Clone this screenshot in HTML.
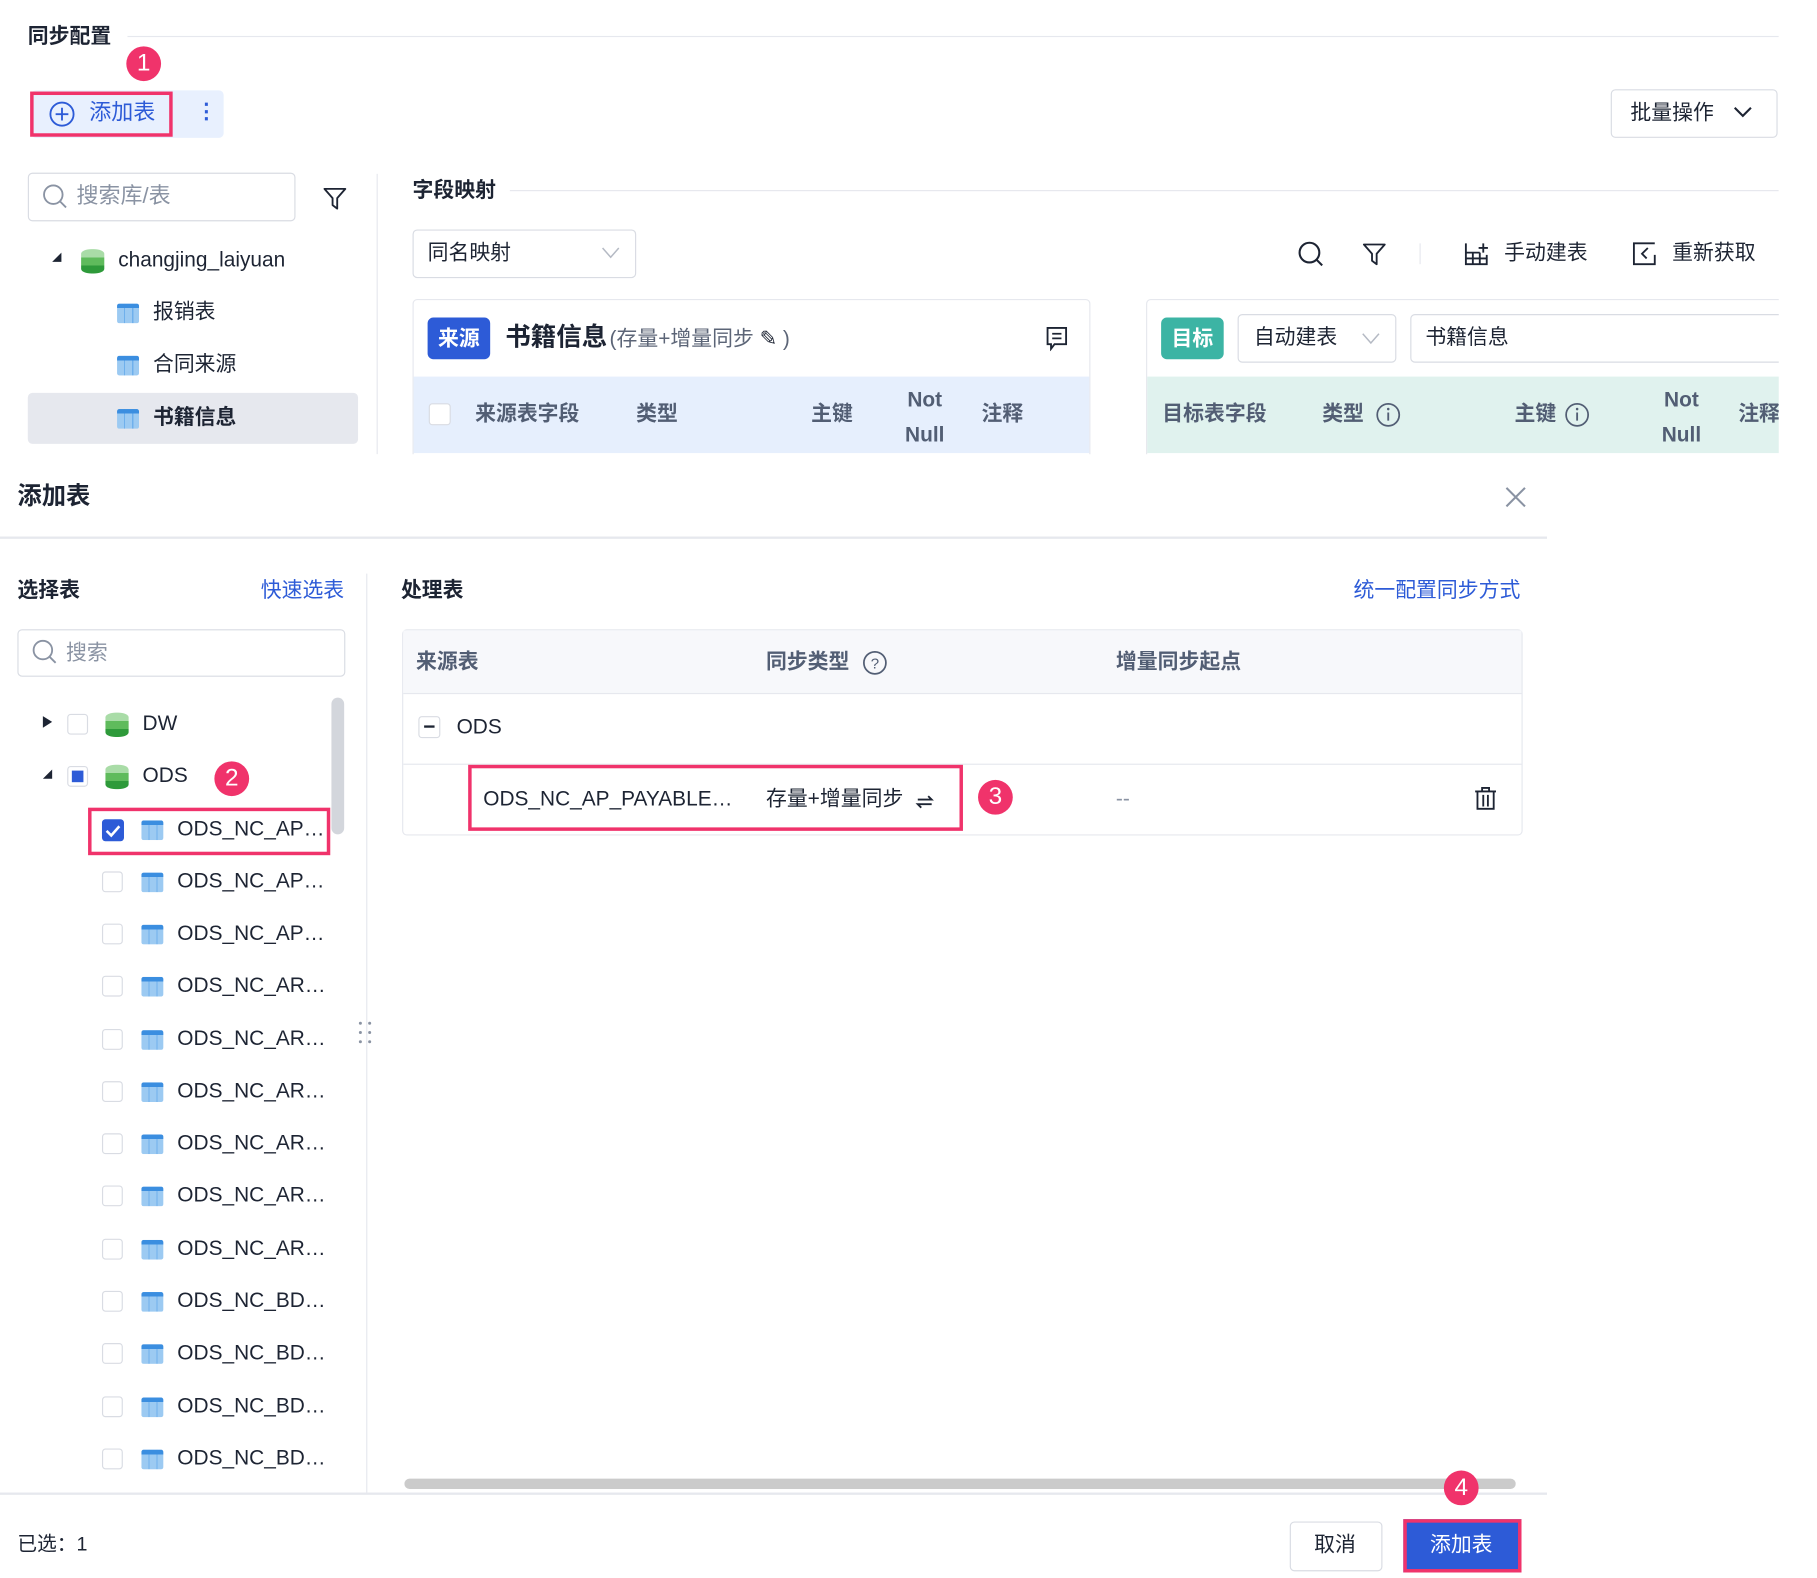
<!DOCTYPE html>
<html><head><meta charset="utf-8"><style>
html,body{margin:0;padding:0;background:#fff;overflow:hidden;width:1817px;height:1572px}
#w{position:absolute;left:0;top:0;width:1568px;height:1357px;transform:scale(1.1588);transform-origin:0 0;font-family:"Liberation Sans","Noto Sans CJK SC",sans-serif;color:#1d2433;font-size:18px}
.a{position:absolute;white-space:nowrap;line-height:1.2}
.b{font-weight:bold}
.line{position:absolute;background:#e6e8ee}
.box{position:absolute;border:1px solid #d9dce3;border-radius:4px;box-sizing:border-box}
.pink{position:absolute;border:3px solid #f0336b;box-sizing:border-box}
.badge{position:absolute;width:30px;height:30px;border-radius:50%;background:#f0336b;color:#fff;font-size:21px;text-align:center;line-height:30px!important}
.hd{color:#525e74;font-weight:bold}
.cb{position:absolute;width:18px;height:18px;border:1px solid #d9dce3;border-radius:3px;box-sizing:border-box;background:#fff}
.tb{position:absolute;width:19px;height:17px;border-radius:2px;background:linear-gradient(#3b8ee0 0 4px,transparent 4px),repeating-linear-gradient(90deg,#9ccaf2 0 6px,#6fb0ec 6px 7px);}
.db{position:absolute;width:20px;height:21px;border-radius:9px/4px;background:linear-gradient(#a9dca7 0 7px,#5fbb5c 7px 14px,#2e9a3a 14px)}
.gray{color:#8a93a3}
.blue{color:#2d5bd7}
</style></head><body><div id="w">
<div class="a b" style="left:24px;top:21px;font-size:18px">同步配置</div>
<div class="line" style="left:110px;top:31px;width:1425px;height:1px"></div>
<div class="a" style="left:27px;top:78px;width:166px;height:41px;background:#e8f0fe;border-radius:4px"></div>
<div class="pink" style="left:26px;top:79px;width:123px;height:39px"></div>
<svg class="a" style="left:42px;top:87px" width="23" height="23" viewBox="0 0 23 23"><circle cx="11.5" cy="11.5" r="10" fill="none" stroke="#2d5bd7" stroke-width="1.6"/><path d="M11.5 6v11M6 11.5h11" stroke="#2d5bd7" stroke-width="1.6"/></svg>
<div class="a blue" style="left:77px;top:87px;font-size:19px">添加表</div>
<div class="a blue" style="left:169px;top:86px;font-size:18px;font-weight:bold">⋮</div>
<div class="badge" style="left:109px;top:40px">1</div>
<div class="box" style="left:1390px;top:77px;width:144px;height:42px"></div>
<div class="a" style="left:1407px;top:87px">批量操作</div>
<svg class="a" style="left:1495px;top:91px" width="18" height="12"><path d="M2 2l7 7 7-7" fill="none" stroke="#1d2433" stroke-width="1.8"/></svg>

<div class="box" style="left:24px;top:149px;width:231px;height:42px"></div>
<svg class="a" style="left:36px;top:158px" width="24" height="24"><circle cx="10" cy="10" r="8" fill="none" stroke="#8a93a3" stroke-width="1.6"/><path d="M16 16l5 5" stroke="#8a93a3" stroke-width="1.6"/></svg>
<div class="a gray" style="left:66px;top:159px;font-size:19px">搜索库/表</div>
<svg class="a" style="left:278px;top:160px" width="22" height="22"><path d="M2 3h18l-7 8v9l-4-3v-6z" fill="none" stroke="#1d2433" stroke-width="1.6" stroke-linejoin="round"/></svg>
<div class="line" style="left:325px;top:150px;width:1px;height:242px"></div>
<svg class="a" style="left:44px;top:217px" width="10" height="10"><path d="M1 9h8V1z" fill="#1d2433"/></svg>
<div class="db" style="left:70px;top:215px"></div>
<div class="a" style="left:102px;top:214px">changjing_laiyuan</div>
<div class="tb" style="left:101px;top:262px"></div><div class="a" style="left:132px;top:259px">报销表</div>
<div class="tb" style="left:101px;top:307px"></div><div class="a" style="left:132px;top:304px">合同来源</div>
<div class="a" style="left:24px;top:339px;width:285px;height:44px;background:#e6e8ee;border-radius:4px"></div>
<div class="tb" style="left:101px;top:353px"></div><div class="a b" style="left:132px;top:350px">书籍信息</div>

<div class="a b" style="left:356px;top:154px">字段映射</div>
<div class="line" style="left:440px;top:164px;width:1095px;height:1px"></div>
<div class="box" style="left:356px;top:198px;width:193px;height:42px"></div>
<div class="a" style="left:369px;top:208px">同名映射</div>
<svg class="a" style="left:519px;top:212px" width="16" height="12"><path d="M1 2l7 8 7-8" fill="none" stroke="#b5bac4" stroke-width="1.3"/></svg>
<svg class="a" style="left:1119px;top:207px" width="24" height="24"><circle cx="11" cy="11" r="8.5" fill="none" stroke="#1d2433" stroke-width="1.8"/><path d="M17 17l5 5" stroke="#1d2433" stroke-width="1.8"/></svg>
<svg class="a" style="left:1175px;top:208px" width="22" height="22"><path d="M2 3h18l-7 8v9l-4-3v-6z" fill="none" stroke="#1d2433" stroke-width="1.6" stroke-linejoin="round"/></svg>
<div class="line" style="left:1225px;top:210px;width:1px;height:18px"></div>
<svg class="a" style="left:1263px;top:208px" width="22" height="22"><path d="M2 2v18h18v-8M2 10h12M2 15h18M8 10v10M14 10v10M17 2v8M13 6h8" fill="none" stroke="#1d2433" stroke-width="1.6"/></svg>
<div class="a" style="left:1298px;top:208px">手动建表</div>
<svg class="a" style="left:1408px;top:208px" width="22" height="22"><path d="M20 2H2v18h18V12" fill="none" stroke="#1d2433" stroke-width="1.6"/><path d="M14 6l-5 5 4 4" fill="none" stroke="#1d2433" stroke-width="1.6"/></svg>
<div class="a" style="left:1443px;top:208px">重新获取</div>

<div class="box" style="left:356px;top:258px;width:585px;height:140px;border-color:#e6e8ee"></div>
<div class="a" style="left:369px;top:274px;width:54px;height:36px;background:#2d5bd7;border-radius:5px;color:#fff;font-weight:bold;font-size:18px;text-align:center;line-height:36px">来源</div>
<div class="a b" style="left:436px;top:278px;font-size:22px">书籍信息</div>
<div class="a" style="left:526px;top:282px;font-size:18px;color:#5c6577">(存量+增量同步 <span style="color:#1d2433">✎</span> )</div>
<svg class="a" style="left:902px;top:281px" width="20" height="22"><path d="M2 2h16v14H8l-3 4v-4H2z" fill="none" stroke="#1d2433" stroke-width="1.6"/><path d="M6 7h8M6 11h8" stroke="#1d2433" stroke-width="1.5"/></svg>
<div class="a" style="left:357px;top:325px;width:583px;height:66px;background:#e6effd"></div>
<div class="cb" style="left:370px;top:348px;width:19px;height:19px"></div>
<div class="a hd" style="left:410px;top:347px">来源表字段</div>
<div class="a hd" style="left:549px;top:347px">类型</div>
<div class="a hd" style="left:700px;top:347px">主键</div>
<div class="a hd" style="left:781px;top:330px;text-align:center;line-height:30px">Not<br>Null</div>
<div class="a hd" style="left:847px;top:347px">注释</div>

<div class="box" style="left:989px;top:258px;width:570px;height:140px;border-color:#e6e8ee"></div>
<div class="a" style="left:1002px;top:274px;width:54px;height:36px;background:#3cb4a4;border-radius:5px;color:#fff;font-weight:bold;font-size:18px;text-align:center;line-height:36px">目标</div>
<div class="box" style="left:1068px;top:271px;width:137px;height:42px"></div>
<div class="a" style="left:1082px;top:281px">自动建表</div>
<svg class="a" style="left:1175px;top:286px" width="16" height="12"><path d="M1 2l7 8 7-8" fill="none" stroke="#b5bac4" stroke-width="1.3"/></svg>
<div class="box" style="left:1217px;top:271px;width:340px;height:42px"></div>
<div class="a" style="left:1230px;top:281px">书籍信息</div>
<div class="a" style="left:990px;top:325px;width:560px;height:66px;background:#e0f2ee"></div>
<div class="a hd" style="left:1003px;top:347px">目标表字段</div>
<div class="a hd" style="left:1141px;top:347px">类型</div>
<svg class="a" style="left:1187px;top:347px" width="22" height="22"><circle cx="11" cy="11" r="9.5" fill="none" stroke="#525e74" stroke-width="1.5"/><path d="M11 9v7" stroke="#525e74" stroke-width="1.6"/><circle cx="11" cy="6" r="1.1" fill="#525e74"/></svg>
<div class="a hd" style="left:1307px;top:347px">主键</div>
<svg class="a" style="left:1350px;top:347px" width="22" height="22"><circle cx="11" cy="11" r="9.5" fill="none" stroke="#525e74" stroke-width="1.5"/><path d="M11 9v7" stroke="#525e74" stroke-width="1.6"/><circle cx="11" cy="6" r="1.1" fill="#525e74"/></svg>
<div class="a hd" style="left:1434px;top:330px;text-align:center;line-height:30px">Not<br>Null</div>
<div class="a hd" style="left:1500px;top:347px">注释</div>
<div class="a" style="left:1535px;top:0;width:40px;height:400px;background:#fff"></div>

<div class="a" style="left:0;top:392px;width:1568px;height:970px;background:#fff"></div>
<div class="a b" style="left:15px;top:416px;font-size:21px">添加表</div>
<svg class="a" style="left:1298px;top:419px" width="20" height="20"><path d="M2 2l16 16M18 2L2 18" stroke="#8a93a3" stroke-width="1.8"/></svg>
<div class="line" style="left:0;top:463px;width:1335px;height:2px"></div>
<div class="a b" style="left:15px;top:499px">选择表</div>
<div class="a blue" style="left:225px;top:499px">快速选表</div>
<div class="line" style="left:316px;top:495px;width:1px;height:793px"></div>
<div class="box" style="left:15px;top:543px;width:283px;height:41px"></div>
<svg class="a" style="left:27px;top:551px" width="24" height="24"><circle cx="10" cy="10" r="8" fill="none" stroke="#8a93a3" stroke-width="1.6"/><path d="M16 16l5 5" stroke="#8a93a3" stroke-width="1.6"/></svg>
<div class="a gray" style="left:57px;top:553px">搜索</div>
<div class="a" style="left:286px;top:602px;width:11px;height:118px;background:#d3d6dc;border-radius:6px"></div>

<svg class="a" style="left:36px;top:617px" width="10" height="12"><path d="M1 1l8 5-8 5z" fill="#1d2433"/></svg>
<div class="cb" style="left:58px;top:616px"></div>
<div class="db" style="left:91px;top:615px"></div>
<div class="a" style="left:123px;top:614px">DW</div>
<svg class="a" style="left:36px;top:663px" width="10" height="10"><path d="M1 9h8V1z" fill="#1d2433"/></svg>
<div class="cb" style="left:58px;top:661px"></div>
<div class="a" style="left:62px;top:665px;width:10px;height:10px;background:#2d5bd7"></div>
<div class="db" style="left:91px;top:660px"></div>
<div class="a" style="left:123px;top:659px">ODS</div>
<div class="badge" style="left:185px;top:657px">2</div>

<div class="pink" style="left:76px;top:697px;width:209px;height:41px"></div>
<div class="a" style="left:88px;top:707px;width:19px;height:19px;background:#2d5bd7;border-radius:3px"></div>
<svg class="a" style="left:88px;top:707px" width="19" height="19"><path d="M4 10l4 4 7-8" fill="none" stroke="#fff" stroke-width="2.2"/></svg>
<div class="tb" style="left:122px;top:708px"></div><div class="a" style="left:153px;top:705px">ODS_NC_AP…</div>

<div class="cb" style="left:88px;top:752px"></div><div class="tb" style="left:122px;top:753px"></div><div class="a" style="left:153px;top:750px">ODS_NC_AP…</div>
<div class="cb" style="left:88px;top:797px"></div><div class="tb" style="left:122px;top:798px"></div><div class="a" style="left:153px;top:795px">ODS_NC_AP…</div>
<div class="cb" style="left:88px;top:842px"></div><div class="tb" style="left:122px;top:843px"></div><div class="a" style="left:153px;top:840px">ODS_NC_AR…</div>
<div class="cb" style="left:88px;top:888px"></div><div class="tb" style="left:122px;top:889px"></div><div class="a" style="left:153px;top:886px">ODS_NC_AR…</div>
<div class="cb" style="left:88px;top:933px"></div><div class="tb" style="left:122px;top:934px"></div><div class="a" style="left:153px;top:931px">ODS_NC_AR…</div>
<div class="cb" style="left:88px;top:978px"></div><div class="tb" style="left:122px;top:979px"></div><div class="a" style="left:153px;top:976px">ODS_NC_AR…</div>
<div class="cb" style="left:88px;top:1023px"></div><div class="tb" style="left:122px;top:1024px"></div><div class="a" style="left:153px;top:1021px">ODS_NC_AR…</div>
<div class="cb" style="left:88px;top:1069px"></div><div class="tb" style="left:122px;top:1070px"></div><div class="a" style="left:153px;top:1067px">ODS_NC_AR…</div>
<div class="cb" style="left:88px;top:1114px"></div><div class="tb" style="left:122px;top:1115px"></div><div class="a" style="left:153px;top:1112px">ODS_NC_BD…</div>
<div class="cb" style="left:88px;top:1159px"></div><div class="tb" style="left:122px;top:1160px"></div><div class="a" style="left:153px;top:1157px">ODS_NC_BD…</div>
<div class="cb" style="left:88px;top:1205px"></div><div class="tb" style="left:122px;top:1206px"></div><div class="a" style="left:153px;top:1203px">ODS_NC_BD…</div>
<div class="cb" style="left:88px;top:1250px"></div><div class="tb" style="left:122px;top:1251px"></div><div class="a" style="left:153px;top:1248px">ODS_NC_BD…</div>

<svg class="a" style="left:309px;top:881px" width="12" height="22"><g fill="#8a93a3"><circle cx="2" cy="2" r="1.3"/><circle cx="10" cy="2" r="1.3"/><circle cx="2" cy="10" r="1.3"/><circle cx="10" cy="10" r="1.3"/><circle cx="2" cy="18" r="1.3"/><circle cx="10" cy="18" r="1.3"/></g></svg>

<div class="a b" style="left:346px;top:499px">处理表</div>
<div class="a blue" style="left:1168px;top:499px">统一配置同步方式</div>
<div class="box" style="left:347px;top:543px;width:967px;height:178px;border-color:#e6e8ee"></div>
<div class="a" style="left:348px;top:544px;width:965px;height:54px;background:#f7f8fb"></div>
<div class="line" style="left:348px;top:598px;width:965px;height:1px"></div>
<div class="line" style="left:348px;top:659px;width:965px;height:1px"></div>
<div class="a hd" style="left:359px;top:561px">来源表</div>
<div class="a hd" style="left:661px;top:561px">同步类型</div>
<svg class="a" style="left:744px;top:561px" width="22" height="22"><circle cx="11" cy="11" r="9.5" fill="none" stroke="#525e74" stroke-width="1.5"/><text x="11" y="16" font-size="13" text-anchor="middle" fill="#525e74" font-family="Liberation Sans">?</text></svg>
<div class="a hd" style="left:963px;top:561px">增量同步起点</div>
<div class="cb" style="left:361px;top:618px;width:19px;height:19px"></div>
<div class="a" style="left:366px;top:626px;width:9px;height:2px;background:#1d2433"></div>
<div class="a" style="left:394px;top:617px">ODS</div>
<div class="pink" style="left:404px;top:660px;width:427px;height:57px"></div>
<div class="a" style="left:417px;top:679px">ODS_NC_AP_PAYABLE…</div>
<div class="a" style="left:661px;top:679px">存量+增量同步</div>
<svg class="a" style="left:789px;top:683px" width="18" height="18"><path d="M3 7h12l-3-3M15 11H3l3 3" fill="none" stroke="#1d2433" stroke-width="1.6"/></svg>
<div class="badge" style="left:844px;top:673px">3</div>
<div class="a gray" style="left:963px;top:679px">--</div>
<svg class="a" style="left:1271px;top:678px" width="22" height="22"><path d="M2 5h18M8 5V2h6v3M4 5v15h14V5M9 8v10M13 8v10" fill="none" stroke="#1d2433" stroke-width="1.6"/></svg>

<div class="a" style="left:349px;top:1276px;width:959px;height:9px;background:#cbcbcb;border-radius:5px"></div>
<div class="line" style="left:0;top:1288px;width:1335px;height:2px"></div>
<div class="a" style="left:15px;top:1323px;font-size:17px">已选：1</div>
<div class="box" style="left:1113px;top:1313px;width:80px;height:43px"></div>
<div class="a" style="left:1134px;top:1323px">取消</div>
<div class="a" style="left:1211px;top:1311px;width:102px;height:46px;background:#2d5bd7;border:3px solid #f0336b;box-sizing:border-box"></div>
<div class="a" style="left:1234px;top:1323px;color:#fff">添加表</div>
<div class="badge" style="left:1246px;top:1269px">4</div>
</div></body></html>
